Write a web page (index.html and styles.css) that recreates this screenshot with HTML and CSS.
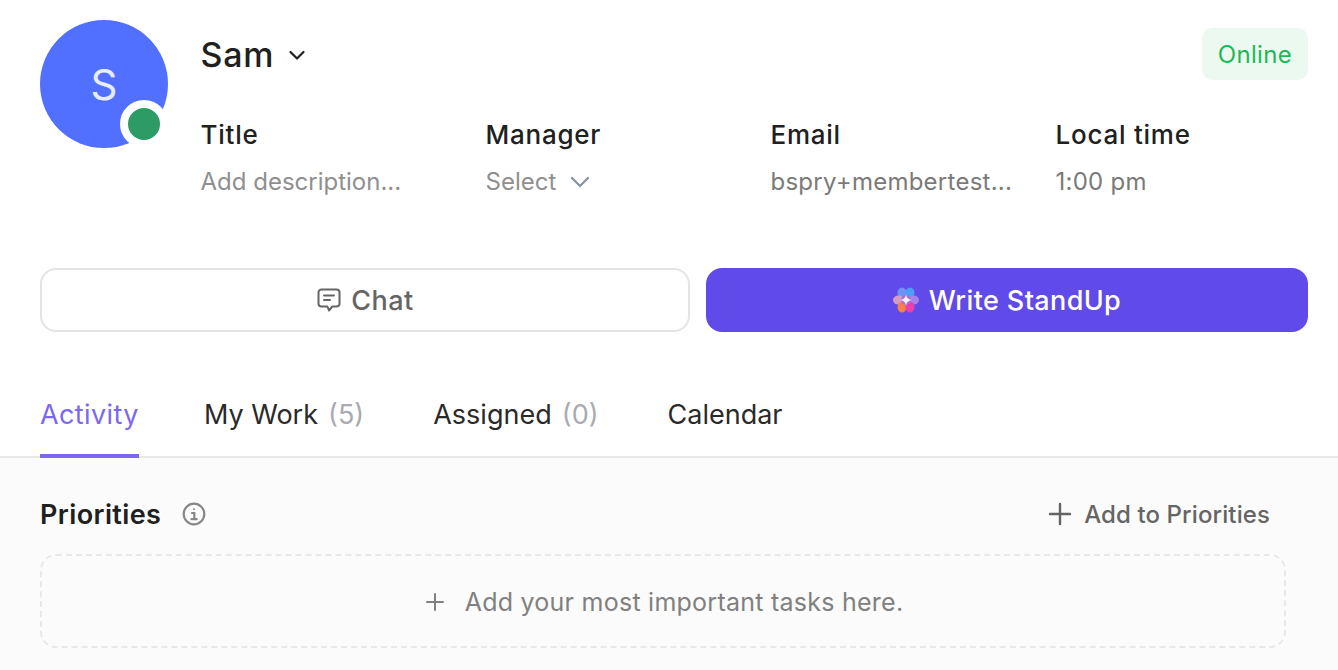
FILE: index.html
```html
<!DOCTYPE html>
<html lang="en">
<head>
  <meta charset="UTF-8">
  <meta name="viewport" content="width=device-width, initial-scale=1.0">
  <title>Sam - Profile</title>
  <link rel="stylesheet" href="styles.css">
</head>
<body>
  <div class="profile">
    <div class="profile-head">
      <div class="avatar">
        <span>S</span>
        <span class="avatar-status"></span>
      </div>
      <div class="profile-info">
        <div class="name-row">
          <div class="name">Sam
            <svg class="name-caret" width="18" height="18" viewBox="0 0 18 18" fill="none" stroke="#202020" stroke-width="2.2" stroke-linecap="round" stroke-linejoin="round"><path d="M2.5 6 9 12.5 15.500 6"/></svg>
          </div>
          <div class="online-badge">Online</div>
        </div>
        <div class="fields">
          <div class="field">
            <div class="field-label">Title</div>
            <div class="field-value field-muted">Add description...</div>
          </div>
          <div class="field">
            <div class="field-label">Manager</div>
            <div class="field-value field-muted">Select
              <svg class="select-caret" width="22" height="22" viewBox="0 0 22 22" fill="none" stroke="#87909e" stroke-width="2.2" stroke-linecap="round" stroke-linejoin="round"><path d="M3 7 11 15 19 7"/></svg>
            </div>
          </div>
          <div class="field">
            <div class="field-label">Email</div>
            <div class="field-value field-wide">bspry+membertest...</div>
          </div>
          <div class="field">
            <div class="field-label">Local time</div>
            <div class="field-value field-wide">1:00 pm</div>
          </div>
        </div>
      </div>
    </div>

    <div class="actions">
      <button class="btn btn-chat">
        <svg width="26" height="26" viewBox="0 0 26 26" fill="none" stroke="#656565" stroke-width="2" stroke-linecap="round" stroke-linejoin="round"><path d="M5.5 2.5h15a3 3 0 0 1 3 3v11a3 3 0 0 1-3 3h-4.200l-3.300 4-1.600-4H5.500a3 3 0 0 1-3-3v-11a3 3 0 0 1 3-3Z"/><path d="M8 8.500h10M8 13h6"/></svg>
        Chat
      </button>
      <button class="btn btn-standup">
        <svg width="26" height="26" viewBox="0 0 26 26">
          <ellipse cx="9" cy="6" rx="4.500" ry="5.500" fill="#6f93f4"/>
          <ellipse cx="17" cy="6" rx="4.500" ry="5.500" fill="#4f9df7"/>
          <ellipse cx="5.500" cy="13" rx="5.500" ry="4.500" fill="#d79ac6"/>
          <ellipse cx="20.500" cy="13" rx="5.500" ry="4.500" fill="#a583ea"/>
          <ellipse cx="9" cy="20" rx="4.500" ry="5.500" fill="#f4824a"/>
          <ellipse cx="17" cy="20" rx="4.500" ry="5.500" fill="#ec3fb0"/>
          <circle cx="13" cy="13" r="5" fill="#a86fd2"/>
          <path d="M13 7.500c.8 3.300 2.200 4.700 5.500 5.500-3.300.8-4.700 2.200-5.500 5.500-.8-3.300-2.200-4.700-5.500-5.500 3.300-.8 4.700-2.200 5.500-5.500Z" fill="#f3f0ff"/>
        </svg>
        Write StandUp
      </button>
    </div>

    <div class="tabs">
      <div class="tab tab-active">Activity</div>
      <div class="tab">My Work <span class="tab-count">(5)</span></div>
      <div class="tab">Assigned <span class="tab-count">(0)</span></div>
      <div class="tab">Calendar</div>
    </div>

    <div class="activity">
      <div class="priorities-head">
        <div class="priorities-title">Priorities
          <svg width="24" height="24" viewBox="0 0 24 24" fill="none" stroke="#87878a" stroke-width="2.200"><circle cx="12" cy="12" r="10.300"/><path d="M10 11h2.300v6M9.500 17.200h5.200" stroke-linecap="round"/><circle cx="12" cy="7.300" r="1" fill="#87878a" stroke="none"/></svg>
        </div>
        <div class="add-priority">
          <svg width="24" height="24" viewBox="0 0 24 24" fill="none" stroke="#656565" stroke-width="2.400" stroke-linecap="round"><path d="M12 2v20M2 12h20"/></svg>
          Add to Priorities
        </div>
      </div>
      <div class="priorities-empty">
        <svg width="18" height="18" viewBox="0 0 18 18" fill="none" stroke="#808080" stroke-width="2" stroke-linecap="round"><path d="M9 1v16M1 9h16"/></svg>
        Add your most important tasks here.
      </div>
    </div>
  </div>
</body>
</html>
```

FILE: styles.css
```css
html, body {
  margin: 0;
  padding: 0;
  height: 100%;
  overflow: hidden;
}

body {
  font-family: Inter, "Liberation Sans", sans-serif;
  background-color: #fff;
  color: #202020;
}

.profile {
  display: flex;
  flex-direction: column;
  height: 100%;
}

.profile-head {
  display: flex;
  gap: 32.5px;
  padding: 20px 30px 0 40px;
  height: 248px;
  box-sizing: border-box;
}

.avatar {
  position: relative;
  flex: none;
  width: 128px;
  height: 128px;
  border-radius: 50%;
  background-color: #5170ff;
  color: #e8ecff;
  font-size: 42px;
  display: flex;
  align-items: center;
  justify-content: center;
}

.avatar-status {
  position: absolute;
  left: 80px;
  top: 80px;
  width: 32px;
  height: 32px;
  border-radius: 50%;
  background-color: #2d9b66;
  border: 8px solid #fff;
}

.profile-info {
  flex: 1;
  min-width: 0;
}

.name-row {
  display: flex;
  justify-content: space-between;
  align-items: flex-start;
  padding-top: 8px;
  height: 93px;
  box-sizing: border-box;
}

.name {
  display: flex;
  align-items: center;
  gap: 14px;
  font-size: 34px;
  font-weight: 450;
  letter-spacing: 0.8px;
  line-height: 52px;
  margin-top: 1px;
}

.online-badge {
  background-color: #ecf9f1;
  color: #1db954;
  font-size: 24px;
  letter-spacing: 0.3px;
  line-height: 54px;
  height: 52px;
  padding: 0 16px;
  border-radius: 10px;
}

.fields {
  display: flex;
}

.field {
  width: 285px;
  flex: none;
}

.field-label {
  font-size: 26px;
  font-weight: 450;
  letter-spacing: 0.75px;
  line-height: 44px;
}

.field-value {
  display: flex;
  align-items: center;
  gap: 13px;
  font-size: 24px;
  line-height: 36px;
  margin-top: 7px;
  color: #7a7a7a;
}

.field-wide {
  letter-spacing: 0.25px;
}

.field-muted {
  color: #8f8f8f;
}

.actions {
  display: flex;
  gap: 16px;
  padding: 20px 30px 0 40px;
}

.btn {
  display: flex;
  align-items: center;
  justify-content: center;
  gap: 9px;
  height: 64px;
  box-sizing: border-box;
  border-radius: 16px;
  font-family: inherit;
  font-size: 27px;
  font-weight: 450;
  letter-spacing: 0.5px;
  cursor: pointer;
}

.btn-chat {
  width: 650px;
  flex: none;
  background-color: #fff;
  border: 2px solid #e4e4e4;
  color: #656565;
}

.btn-standup {
  flex: 1;
  gap: 10px;
  letter-spacing: 0.38px;
  background-color: #604ae9;
  border: none;
  color: #fff;
}

.tabs {
  display: flex;
  gap: 65px;
  padding: 0 40px;
  height: 126px;
  box-sizing: border-box;
  border-bottom: 2px solid #e8e8e8;
  align-items: flex-end;
}

.tab {
  font-size: 27px;
  line-height: 44px;
  padding-bottom: 17px;
  margin-bottom: -2px;
  color: #2a2a2a;
  border-bottom: 4px solid transparent;
}

.tab-active {
  color: #7b68ee;
  letter-spacing: 0.4px;
  border-bottom-color: #7b68ee;
}

.tab-count {
  color: #a9abb0;
  margin: 0 4px 0 2.5px;
}

.activity {
  flex: 1;
  background-color: #fbfbfb;
  padding: 0 52px 0 40px;
}

.priorities-head {
  display: flex;
  justify-content: space-between;
  align-items: center;
  height: 96px;
  box-sizing: border-box;
  padding: 16px 16px 0 0;
}

.priorities-title {
  display: flex;
  align-items: center;
  gap: 21px;
  font-size: 27px;
  font-weight: 600;
  letter-spacing: 0.4px;
}

.add-priority {
  display: flex;
  align-items: center;
  gap: 12px;
  font-size: 24px;
  font-weight: 450;
  letter-spacing: 0.1px;
  color: #656565;
}

.priorities-empty {
  display: flex;
  align-items: center;
  justify-content: center;
  gap: 21px;
  height: 94px;
  box-sizing: border-box;
  padding: 2px 0 0 3px;
  border: 2px dashed #e8e8e8;
  border-radius: 16px;
  font-size: 25px;
  letter-spacing: 0.25px;
  color: #808080;
}
```
